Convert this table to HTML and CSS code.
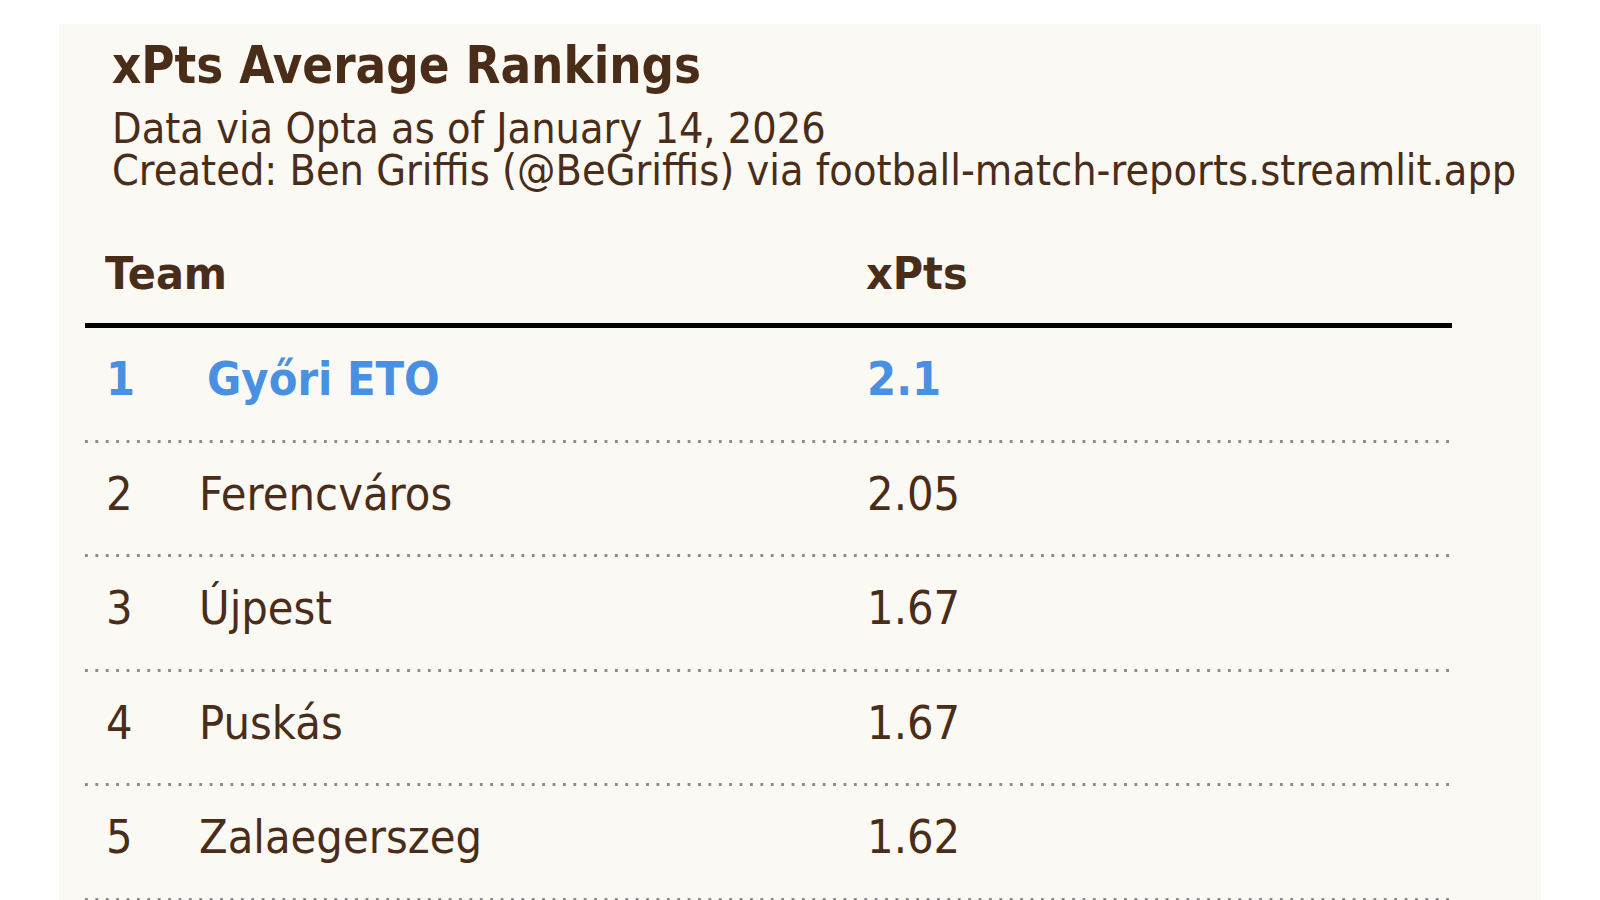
FILE: index.html
```html
<!DOCTYPE html>
<html lang="en">
<head>
<meta charset="utf-8">
<title>xPts Average Rankings</title>
<link rel="stylesheet" href="styles.css">
</head>
<body>
<main class="card">
  <header class="head">
    <h1 class="title"><span class="sx">xPts Average Rankings</span></h1>
    <p class="sub"><span class="sx">Data via Opta as of January 14, 2026</span></p>
    <p class="sub"><span class="sx">Created: Ben Griffis (@BeGriffis) via football-match-reports.streamlit.app</span></p>
  </header>
  <section class="table">
    <div class="thead">
      <div class="th th-team"><span class="sx">Team</span></div>
      <div class="th th-xpts"><span class="sx">xPts</span></div>
    </div>
    <div class="row hl">
      <div class="rank"><span class="sx">1</span></div>
      <div class="team"><span class="sx">Győri ETO</span></div>
      <div class="xpts"><span class="sx">2.1</span></div>
    </div>
    <div class="row">
      <div class="rank"><span class="sx">2</span></div>
      <div class="team"><span class="sx">Ferencváros</span></div>
      <div class="xpts"><span class="sx">2.05</span></div>
    </div>
    <div class="row">
      <div class="rank"><span class="sx">3</span></div>
      <div class="team"><span class="sx">Újpest</span></div>
      <div class="xpts"><span class="sx">1.67</span></div>
    </div>
    <div class="row">
      <div class="rank"><span class="sx">4</span></div>
      <div class="team"><span class="sx">Puskás</span></div>
      <div class="xpts"><span class="sx">1.67</span></div>
    </div>
    <div class="row">
      <div class="rank"><span class="sx">5</span></div>
      <div class="team"><span class="sx">Zalaegerszeg</span></div>
      <div class="xpts"><span class="sx">1.62</span></div>
    </div>
  </section>
</main>
</body>
</html>
```

FILE: styles.css
```css
html, body {
  margin: 0;
  padding: 0;
  background: #ffffff;
}

body {
  font-family: "DejaVu Sans", "Liberation Sans", sans-serif;
  color: #4a2d19;
  padding-top: 24px;
  overflow: hidden;
  height: 900px;
  box-sizing: border-box;
}

.card {
  margin-left: 59px;
  width: 1482px;
  min-height: 1000px;
  background: #faf9f4;
  padding: 12px 0 0 0;
  box-sizing: border-box;
}

.sx {
  display: inline-block;
  transform: scaleX(0.88);
  transform-origin: 0 0;
  white-space: nowrap;
}

.head {
  padding-left: 53px;
}

.title {
  margin: 0;
  font-size: 51px;
  font-weight: bold;
  line-height: 60px;
  white-space: nowrap;
}

.title .sx {
  transform: scaleX(0.891);
}

.sub {
  margin: 0;
  font-size: 43.4px;
  line-height: 42px;
  white-space: nowrap;
}

.sub .sx {
  transform: scaleX(0.887);
}

.title + .sub {
  margin-top: 11px;
}

.table {
  margin-left: 26px;
  width: 1367px;
  margin-top: 58px;
}

.thead {
  display: grid;
  grid-template-columns: 780px 1fr;
  font-size: 44px;
  font-weight: bold;
  line-height: 50px;
  padding-bottom: 24px;
  border-bottom: 5px solid #000000;
}

.thead .sx {
  transform: scaleX(0.942);
}

.th-team {
  padding-left: 20px;
}

.th-xpts {
  padding-left: 1px;
}

.row {
  display: grid;
  grid-template-columns: 114px 668px 1fr;
  font-size: 46px;
  line-height: 102px;
  height: 114.6px;
  box-sizing: border-box;
  padding-bottom: 12.6px;
  background-image: linear-gradient(to right, #8c8c8c 3px, transparent 3px);
  background-size: 10.4px 3px;
  background-repeat: repeat-x;
  background-position: 0 100%;
}

.row .sx {
  transform: scaleX(0.91);
}

.rank {
  padding-left: 21px;
}

.row.hl {
  color: #4a90e2;
  font-weight: bold;
}

.row.hl .team {
  padding-left: 8px;
}
```
